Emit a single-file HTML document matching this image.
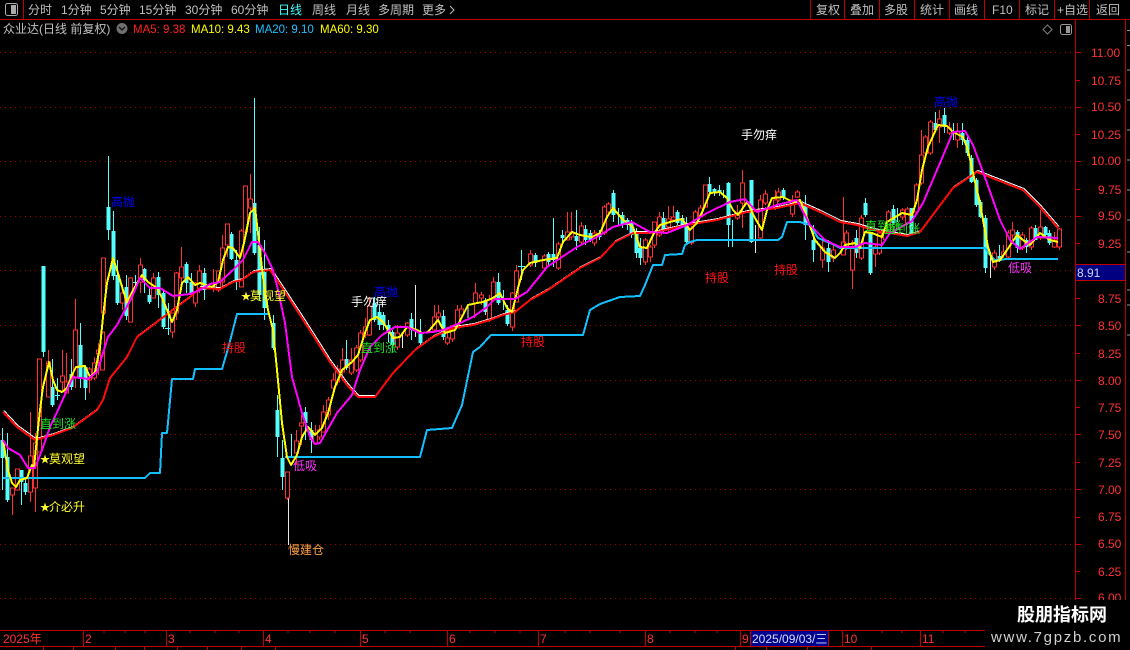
<!DOCTYPE html>
<html><head><meta charset="utf-8"><style>
html,body{margin:0;padding:0;background:#000;width:1130px;height:650px;overflow:hidden}
svg{display:block}
text{font-family:"Liberation Sans","WenQuanYi Zen Hei","Noto Sans CJK SC",sans-serif;font-size:12px}
.t text{fill:#c0c0c0}
.a text{fill:#ff3232}
.l polyline{fill:none;stroke-linejoin:round}
</style></head><body>
<svg width="1130" height="650" viewBox="0 0 1130 650" xmlns="http://www.w3.org/2000/svg">
<rect width="1130" height="650" fill="#000"/>
<!-- grid -->
<g stroke="#a00000" stroke-width="1" stroke-dasharray="1 4" shape-rendering="crispEdges">
<path d="M0 52.5H1075M0 107.5H1075M0 161.5H1075M0 216.5H1075M0 270.5H1075M0 325.5H1075M0 380.5H1075M0 434.5H1075M0 489.5H1075M0 544.5H1075M0 598.5H1075"/>
</g>
<!-- frame -->
<g stroke="#c00000" stroke-width="1" fill="none" shape-rendering="crispEdges">
<path d="M0 19.5H1130M23.5 0V19M810.5 0V19M844.5 0V19M879.5 0V19M914.5 0V19M949.5 0V19M984.5 0V19M1019.5 0V19M1054.5 0V19M1089.5 0V19"/>
<path d="M1075.5 20V630M1125.5 20V630"/>
<path d="M1076 52.5H1081M1076 80.5H1080M1076 107.5H1081M1076 134.5H1080M1076 161.5H1081M1076 189.5H1080M1076 216.5H1081M1076 243.5H1080M1076 298.5H1080M1076 325.5H1081M1076 353.5H1080M1076 380.5H1081M1076 407.5H1080M1076 434.5H1081M1076 462.5H1080M1076 489.5H1081M1076 517.5H1080M1076 544.5H1081M1076 571.5H1080M1076 598.5H1081"/>
<path d="M0 630.5H985M0 646.5H985M83.5 630V646M166.5 630V646M263.5 630V646M360.5 630V646M447.5 630V646M538.5 630V646M645.5 630V646M740.5 630V646M750.5 630V646M828.5 630V646M842.5 630V646M920.5 630V646"/>
<path d="M104 631V633M125 631V633M145 631V633M190 631V633M215 631V633M239 631V633M288 631V633M310 631V633M335 631V633M385 631V633M410 631V633M470 631V633M495 631V633M520 631V633M565 631V633M590 631V633M620 631V633M670 631V633M695 631V633M717 631V633M782 631V633M802 631V633M882 631V633M902 631V633M943 631V633M965 631V633"/>
<path d="M43.5 647V650M73.5 647V650M115.5 647V650M144.5 647V650M177.5 647V650M207.5 647V650M241.5 647V650M275.5 647V650M735.5 647V650M766.5 647V650M807.5 647V650M871.5 647V650"/>
</g>
<path d="M1127 30.500H1130M1127 45.500H1130M1127 70H1130M1127 100H1130M1127 130H1130M1127 160H1130M1127 190H1130M1127 220H1130M1127 252H1130M1127 290H1130M1127 305H1130M1127 335H1130" stroke="#999" shape-rendering="crispEdges"/>
<!-- top toolbar -->
<rect x="5.500" y="3.500" width="12" height="12" rx="2" fill="none" stroke="#aaa"/><rect x="11" y="5" width="5" height="9" fill="#aaa"/>
<g class="t">
<text x="28" y="14">分时</text><text x="61" y="14">1分钟</text><text x="100" y="14">5分钟</text><text x="139" y="14">15分钟</text><text x="185" y="14">30分钟</text><text x="231" y="14">60分钟</text>
<text x="278" y="14" style="fill:#40ffff">日线</text><text x="312" y="14">周线</text><text x="346" y="14">月线</text><text x="378" y="14">多周期</text><text x="422" y="14">更多</text>
<text x="816" y="14">复权</text><text x="850" y="14">叠加</text><text x="884" y="14">多股</text><text x="920" y="14">统计</text><text x="954" y="14">画线</text><text x="992" y="14">F10</text><text x="1025" y="14">标记</text><text x="1057" y="14">+自选</text><text x="1096" y="14">返回</text>
<text x="3" y="33">众业达(日线 前复权)</text>
</g>
<path d="M450 6l4 4-4 4" fill="none" stroke="#c0c0c0"/>
<circle cx="122" cy="28.500" r="5.500" fill="#707070"/><path d="M119 27l3 3 3-3" stroke="#111" fill="none" stroke-width="1.300"/>
<text x="133" y="33" style="fill:#ff2020;font-size:11.500px">MA5: 9.38</text>
<text x="191" y="33" style="fill:#ffff00;font-size:11.500px">MA10: 9.43</text>
<text x="255" y="33" style="fill:#20c0ff;font-size:11.500px">MA20: 9.10</text>
<text x="320" y="33" style="fill:#ffff00;font-size:11.500px">MA60: 9.30</text>
<path d="M1047.500 25l4.500 4.500-4.500 4.500-4.500-4.500z" fill="none" stroke="#808080"/>
<rect x="1060.500" y="24.500" width="11" height="10" rx="2" fill="none" stroke="#999"/><rect x="1066" y="26" width="4" height="7" fill="#999"/>
<!-- axis labels -->
<g class="a">
<text x="1091" y="57">11.00</text><text x="1091" y="85">10.75</text><text x="1091" y="111">10.50</text><text x="1091" y="139">10.25</text><text x="1091" y="165">10.00</text><text x="1098" y="194">9.75</text><text x="1098" y="220">9.50</text><text x="1098" y="248">9.25</text><text x="1098" y="303">8.75</text><text x="1098" y="330">8.50</text><text x="1098" y="358">8.25</text><text x="1098" y="385">8.00</text><text x="1098" y="412">7.75</text><text x="1098" y="439">7.50</text><text x="1098" y="467">7.25</text><text x="1098" y="494">7.00</text><text x="1098" y="521">6.75</text><text x="1098" y="548">6.50</text><text x="1098" y="576">6.25</text><text x="1098" y="602">6.00</text>
<text x="3" y="643">2025年</text><text x="85" y="643">2</text><text x="168" y="643">3</text><text x="265" y="643">4</text><text x="362" y="643">5</text><text x="449" y="643">6</text><text x="540" y="643">7</text><text x="647" y="643">8</text><text x="742" y="643">9</text><text x="844" y="643">10</text><text x="922" y="643">11</text>
</g>
<rect x="1075.500" y="264.500" width="50" height="16" fill="#000080" stroke="#c00000"/>
<text x="1077" y="277" style="fill:#c8d8ff">8.91</text>
<rect x="751" y="631" width="77" height="15" fill="#000090"/>
<text x="752" y="643" style="fill:#d0e0ff">2025/09/03/三</text>
<!-- red wicks -->
<path fill="none" stroke="#ff3232" shape-rendering="crispEdges" d="M12.500 490V515M17.500 469V490M30.500 412V502M35.500 433V512M48.500 350V397M62.500 350V390M66.500 353V390M75.500 299V388M89.500 367V393M94.500 357V380M98.500 343V375M122.500 285V310M140.500 258V293M153.500 273V298M172.500 313V338M176.500 272V320M181.500 247V283M195.500 282V307M199.500 265V293M213.500 269V292M218.500 271V292M222.500 235V287M227.500 224V257M241.500 229V287M245.500 186V232M250.500 174V233M287.500 472V500M296.500 430V465M301.500 415V445M315.500 425V445M319.500 425V440M323.500 405V432M328.500 397V420M333.500 373V395M337.500 365V385M342.500 348V375M351.500 348V375M356.500 345V372M360.500 330V362M365.500 318V338M369.500 297V336M397.500 325V350M407.500 322V337M434.500 305V332M438.500 305V320M447.500 333V345M452.500 328V342M457.500 305V328M461.500 305V318M475.500 283V303M474.500 302V318M481.500 292V305M489.500 295V322M493.500 277V300M512.500 292V331M516.500 265V302M530.500 250V267M544.500 254V270M558.500 242V270M567.500 212V240M571.500 212V240M581.500 222V245M594.500 230V246M604.500 205V235M608.500 202V214M645.500 238V265M650.500 245V262M654.500 222V248M659.500 212V237M668.500 206V232M673.500 206V222M691.500 226V245M695.500 210V224M700.500 205V218M705.500 185V208M737.500 205V220M742.500 170V228M760.500 195V240M765.500 190V205M775.500 190V210M778.500 188V202M792.500 195V217M797.500 190V198M822.500 240V268M833.500 245V262M843.500 197V255M846.500 230V250M852.500 240V289M861.500 215V260M875.500 245V267M879.500 230V255M883.500 230V240M888.500 210V235M902.500 208V220M907.500 207V225M916.500 183V212M921.500 130V185M925.500 135V155M930.500 120V155M939.500 110V143M949.500 122V135M957.500 123V148M994.500 250V270M1003.500 245V258M1008.500 230V258M1012.500 222V240M1022.500 232V250M1031.500 226V250M1040.500 210V240M1054.500 232V248M1059.500 228V250"/>
<!-- cyan wicks -->
<path fill="none" stroke="#54ffff" shape-rendering="crispEdges" d="M2.500 428V490M7.500 433V502M21.500 470V505M25.500 478V495M43.500 266V357M52.500 359V407M57.500 378V400M55 395.500H60M71.500 359V390M80.500 323V388M85.500 365V400M108.500 156V240M113.500 211V280M117.500 260V305M126.500 275V320M135.500 275V290M132 282.500H139M144.500 268V293M149.500 287V304M158.500 272V308M163.500 290V329M168.500 303V335M165 328.500H171M186.500 262V293M191.500 273V297M204.500 268V300M231.500 232V260M236.500 250V290M254.500 98V255M259.500 227V300M264.500 240V320M273.500 315V350M277.500 395V457M282.500 440V490M291.500 434V457M305.500 407V440M311.500 422V453M346.500 340V370M374.500 297V322M379.500 305V330M383.500 312V330M388.500 320V342M392.500 330V352M411.500 313V340M420.500 319V345M443.500 310V340M485.500 298V315M498.500 273V305M503.500 290V310M507.500 305V326M521.500 250V280M518 266.500H525M535.500 253V267M548.500 252V267M553.500 218V267M562.500 230V245M576.500 210V250M585.500 225V245M590.500 230V242M599.500 230V240M613.500 190V222M618.500 208V225M622.500 212V228M627.500 218V230M631.500 220V238M636.500 228V258M640.500 238V265M663.500 212V232M677.500 210V225M682.500 215V228M686.500 217V243M709.500 177V195M714.500 188V196M719.500 185V196M723.500 190V198M728.500 182V247M732.500 220V247M751.500 180V243M783.500 188V200M805.500 195V240M813.500 225V262M828.500 240V272M856.500 230V258M865.500 198V217M870.500 233V275M893.500 205V225M897.500 208V222M911.500 208V233M935.500 112V132M944.500 108V133M953.500 123V140M962.500 123V145M967.500 135V156M971.500 155V183M976.500 178V207M980.500 200V218M985.500 215V273M999.500 245V262M1017.500 230V253M1026.500 238V253M1035.500 225V240M1045.500 226V238M1049.500 230V245"/>
<path fill="none" stroke="#e8e8e8" shape-rendering="crispEdges" d="M402.500 333V348M415.500 285V337M468 305V318M755.500 225V253M288.500 498V545M990.500 253V278"/>
<!-- cyan bodies -->
<path fill="none" stroke="#54ffff" stroke-width="4" shape-rendering="crispEdges" d="M2.500 440V458M7.500 457V500M21.500 470V482M25.500 483V492M43.500 266V352M52.500 387V405M71.500 374V387M80.500 345V378M85.500 367V388M108.500 207V230M113.500 231V276M117.500 275V303M126.500 287V316M144.500 269V280M149.500 295V302M158.500 277V295M163.500 293V327M186.500 264V283M191.500 282V295M204.500 273V290M231.500 234V259M236.500 260V282M254.500 203V253M259.500 245V295M264.500 272V308M273.500 323V348M277.500 410V437M282.500 458V477M305.500 412V423M311.500 430V440M346.500 359V368M374.500 303V320M379.500 312V325M383.500 315V325M388.500 325V333M392.500 332V345M411.500 319V330M420.500 333V343M443.500 316V337M485.500 300V312M498.500 282V303M507.500 310V324M535.500 255V263M548.500 254V262M553.500 254V260M562.500 235V238M576.500 236V241M585.500 229V240M590.500 233V240M599.500 233V237M613.500 193V215M622.500 215V225M627.500 220V225M631.500 223V235M636.500 232V253M640.500 248V258M663.500 218V230M677.500 212V223M682.500 218V225M686.500 223V242M709.500 184V192M714.500 189V193M719.500 190V193M728.500 183V225M751.500 180V242M783.500 190V198M805.500 205V225M813.500 240V250M828.500 248V262M856.500 238V253M865.500 203V215M870.500 233V273M893.500 209V223M911.500 208V233M935.500 123V130M944.500 115V127M962.500 133V140M967.500 140V153M971.500 158V182M976.500 180V205M980.500 202V217M985.500 218V268M999.500 256V261M1017.500 232V248M1026.500 240V247M1035.500 228V240M1045.500 227V235M1049.500 233V243"/>
<!-- red bodies -->
<path fill="#000" stroke="#ff3232" shape-rendering="crispEdges" d="M10.500 488h4v7h-4zM15.500 469h4v21h-4zM28.500 456h4v36h-4zM33.500 443h4v45h-4zM37.500 359h4v93h-4zM46.500 362h4v35h-4zM60.500 376h4v6h-4zM64.500 382h4v11h-4zM73.500 330h4v48h-4zM87.500 369h4v11h-4zM92.500 363h4v15h-4zM96.500 350h4v4h-4zM101.500 258h4v55h-4zM100.500 332h4v38h-4zM120.500 293h4v10h-4zM128.500 278h4v44h-4zM138.500 265h4v17h-4zM151.500 278h4v20h-4zM170.500 313h4v19h-4zM174.500 273h4v40h-4zM179.500 267h4v11h-4zM193.500 283h4v20h-4zM197.500 271h4v19h-4zM216.500 271h4v19h-4zM220.500 248h4v34h-4zM225.500 224h4v21h-4zM239.500 231h4v56h-4zM243.500 186h4v46h-4zM248.500 199h4v9h-4zM285.500 472h4v26h-4zM294.500 441h4v12h-4zM299.500 423h4v3h-4zM313.500 433h4v10h-4zM317.500 430h4v7h-4zM321.500 412h4v20h-4zM326.500 400h4v15h-4zM331.500 380h4v8h-4zM335.500 369h4v13h-4zM340.500 360h4v12h-4zM349.500 360h4v13h-4zM354.500 348h4v22h-4zM358.500 333h4v27h-4zM363.500 327h4v8h-4zM367.500 306h4v29h-4zM395.500 333h4v14h-4zM405.500 323h4v12h-4zM432.500 317h4v13h-4zM436.500 313h4v4h-4zM445.500 338h4v5h-4zM450.500 330h4v9h-4zM455.500 310h4v18h-4zM459.500 309h4v6h-4zM473.500 293h4v10h-4zM479.500 295h4v3h-4zM487.500 300h4v20h-4zM491.500 282h4v18h-4zM510.500 293h4v34h-4zM514.500 271h4v31h-4zM528.500 254h4v11h-4zM542.500 256h4v12h-4zM556.500 244h4v24h-4zM565.500 232h4v8h-4zM569.500 232h4v5h-4zM579.500 226h4v16h-4zM592.500 233h4v10h-4zM602.500 207h4v26h-4zM606.500 204h4v8h-4zM643.500 240h4v22h-4zM648.500 247h4v10h-4zM652.500 222h4v23h-4zM657.500 217h4v18h-4zM666.500 219h4v8h-4zM671.500 217h4v3h-4zM689.500 228h4v15h-4zM693.500 212h4v10h-4zM698.500 208h4v9h-4zM703.500 185h4v22h-4zM735.500 213h4v5h-4zM740.500 183h4v20h-4zM758.500 200h4v38h-4zM763.500 194h4v9h-4zM773.500 200h4v6h-4zM776.500 192h4v8h-4zM790.500 200h4v14h-4zM795.500 192h4v5h-4zM820.500 248h4v12h-4zM831.500 250h4v8h-4zM841.500 242h4v13h-4zM844.500 233h4v14h-4zM850.500 248h4v22h-4zM859.500 218h4v40h-4zM873.500 247h4v7h-4zM877.500 233h4v20h-4zM886.500 212h4v21h-4zM900.500 210h4v7h-4zM905.500 209h4v14h-4zM914.500 185h4v27h-4zM919.500 155h4v28h-4zM923.500 137h4v16h-4zM928.500 122h4v31h-4zM937.500 119h4v8h-4zM947.500 128h4v5h-4zM955.500 132h4v8h-4zM992.500 253h4v14h-4zM1001.500 252h4v3h-4zM1006.500 233h4v24h-4zM1010.500 230h4v5h-4zM1020.500 235h4v13h-4zM1029.500 228h4v19h-4zM1038.500 227h4v11h-4zM1052.500 240h4v7h-4zM1057.500 229h4v18h-4z"/>
<!-- lines -->
<g class="l" shape-rendering="crispEdges">
<polyline stroke="#12c0ff" stroke-width="2" points="3,478 145,478 150,473 160,473 162,433 167,433 172,379 193,379 195,369 222,369 229,345 237,314 270,314"/>
<polyline stroke="#12c0ff" stroke-width="2" points="285,457 420,457 427,430 452,428 462,405 473,352 480,347 491,335 583,335 590,310 600,304 620,297 640,296 645,285 653,265 662,265 665,255 682,254 685,245 690,242 697,240 778,240 782,237 787,222 800,222 810,225 818,238 830,243 840,248 985,248 990,255 995,260 1008,259 1058,259"/>
<polyline stroke="#fff" stroke-width="1" transform="translate(1,-1.500)" points="3,412 17,427 35,440 53,435 72,428 97,410 103,400 110,378 127,357 137,337 153,325 170,312 190,297 200,288 220,289 233,282 242,280 253,272 270,270 277,280 302,318 318,343 330,362 347,385 358,397 375,397 393,373 415,350 433,337 453,328 473,325 490,320 503,315 515,312 530,300 548,290 580,268 600,258 615,242 633,233 653,233 687,225 717,220 747,212 777,208 800,203 820,212 840,222 857,225 873,230 907,236 920,232 935,212 953,188 977,172 1010,185 1023,190 1040,207 1058,228"/>
<polyline stroke="#ff0a0a" stroke-width="2" points="3,412 17,427 35,440 53,435 72,428 97,410 103,400 110,378 127,357 137,337 153,325 170,312 190,297 200,288 220,289 233,282 242,280 253,272 270,270 277,280 302,318 318,343 330,362 347,385 358,397 375,397 393,373 415,350 433,337 453,328 473,325 490,320 503,315 515,312 530,300 548,290 580,268 600,258 615,242 633,233 653,233 687,225 717,220 747,212 777,208 800,203 820,212 840,222 857,225 873,230 907,236 920,232 935,212 953,188 977,172 1010,185 1023,190 1040,207 1058,228"/>
<polyline stroke="#ffff00" stroke-width="2" points="3,440 8,470 12,483 16,487 20,480 27,478 32,465 34,467 37,438 40,410 43,387 49,362 53,380 57,390 62,392 67,388 72,375 76,367 85,366 90,377 95,372 100,347 103,317 107,283 113,258 117,270 123,290 127,302 132,292 142,275 148,282 157,288 163,300 172,322 177,310 182,283 188,277 195,285 200,283 212,287 218,282 223,260 228,247 233,248 240,258 244,243 250,213 255,208 258,233 263,277 268,310 273,330 277,370 282,423 287,457 291,465 297,455 302,437 308,427 315,435 322,428 328,413 335,387 342,370 352,362 358,355 365,333 370,320 377,317 383,322 388,330 393,338 400,337 407,327 417,330 422,333 428,332 438,320 445,333 455,330 462,317 468,305 477,303 483,302 493,298 500,293 507,308 512,312 518,288 523,270 530,263 543,260 557,258 563,242 572,232 580,235 592,237 600,233 607,217 613,208 623,220 633,227 640,247 647,248 653,235 660,225 670,222 682,219 690,230 697,223 703,210 710,193 720,192 727,198 733,210 738,215 747,202 755,218 762,230 767,210 772,198 783,197 793,202 800,200 806,215 815,240 825,252 835,258 840,253 845,245 855,243 860,248 865,232 872,233 882,237 887,222 902,213 912,215 917,200 922,170 928,147 938,125 947,126 953,132 963,137 968,150 973,173 980,203 983,220 988,247 993,262 1000,260 1007,250 1017,235 1023,240 1030,245 1040,233 1050,240 1058,242"/>
<polyline stroke="#ff00ff" stroke-width="2" points="3,440 8,448 20,455 28,468 35,468 42,450 50,427 58,410 68,388 73,377 88,379 97,372 103,353 108,337 117,325 125,310 132,297 140,278 150,288 160,288 173,296 190,294 200,290 210,284 220,282 233,270 243,260 252,242 258,242 265,253 273,270 278,290 285,323 292,377 302,413 310,437 315,444 320,443 337,413 352,395 360,370 370,347 382,335 395,327 407,327 420,333 433,332 443,330 460,323 473,317 487,307 495,299 505,299 515,299 527,292 547,267 577,247 597,237 613,227 632,222 650,232 667,233 687,225 707,213 730,202 745,199 757,212 777,205 797,200 810,225 825,240 840,247 855,247 865,243 882,245 890,233 912,221 923,203 940,163 953,132 965,131 973,145 987,183 1000,220 1010,240 1020,249 1037,237 1058,238"/>
</g>
<!-- labels -->
<g>
<text x="111" y="206" style="fill:#0000ff">高抛</text>
<text x="40" y="428" style="fill:#20e020">直到涨</text>
<text x="40" y="463" style="fill:#ffff30;font-size:10px">★</text><text x="49" y="463" style="fill:#ffff30">莫观望</text>
<text x="40" y="511" style="fill:#ffff30;font-size:10px">★</text><text x="49" y="511" style="fill:#ffff30">介必升</text>
<text x="222" y="352" style="fill:#ff1010">持股</text>
<text x="241" y="300" style="fill:#ffff30;font-size:10px">★</text><text x="250" y="300" style="fill:#ffff30">莫观望</text>
<text x="293" y="470" style="fill:#ff30ff">低吸</text>
<text x="288" y="554" style="fill:#ffa040">慢建仓</text>
<text x="351" y="306" style="fill:#fff">手勿痒</text>
<text x="374" y="296" style="fill:#0000ff">高抛</text>
<text x="361" y="352" style="fill:#20e020">直到涨</text>
<text x="521" y="346" style="fill:#ff1010">持股</text>
<text x="741" y="139" style="fill:#fff">手勿痒</text>
<text x="705" y="282" style="fill:#ff1010">持股</text>
<text x="774" y="274" style="fill:#ff1010">持股</text>
<text x="865" y="230" style="fill:#20e020">直到涨</text>
<text x="884" y="233" style="fill:#20e020">直到涨</text>
<text x="934" y="106" style="fill:#0000ff">高抛</text>
<text x="1008" y="272" style="fill:#ff30ff">低吸</text>
</g>
<!-- watermark -->
<rect x="985" y="600" width="145" height="50" fill="#000"/>
<text x="1017" y="621" style="fill:#fff;font-size:18px;font-weight:bold;font-family:'Liberation Sans','Noto Sans CJK SC',sans-serif">股朋指标网</text>
<text x="991" y="642" style="fill:#d0d0d0;font-size:15px;letter-spacing:1.700px">www.7gpzb.com</text>
</svg>
</body></html>
